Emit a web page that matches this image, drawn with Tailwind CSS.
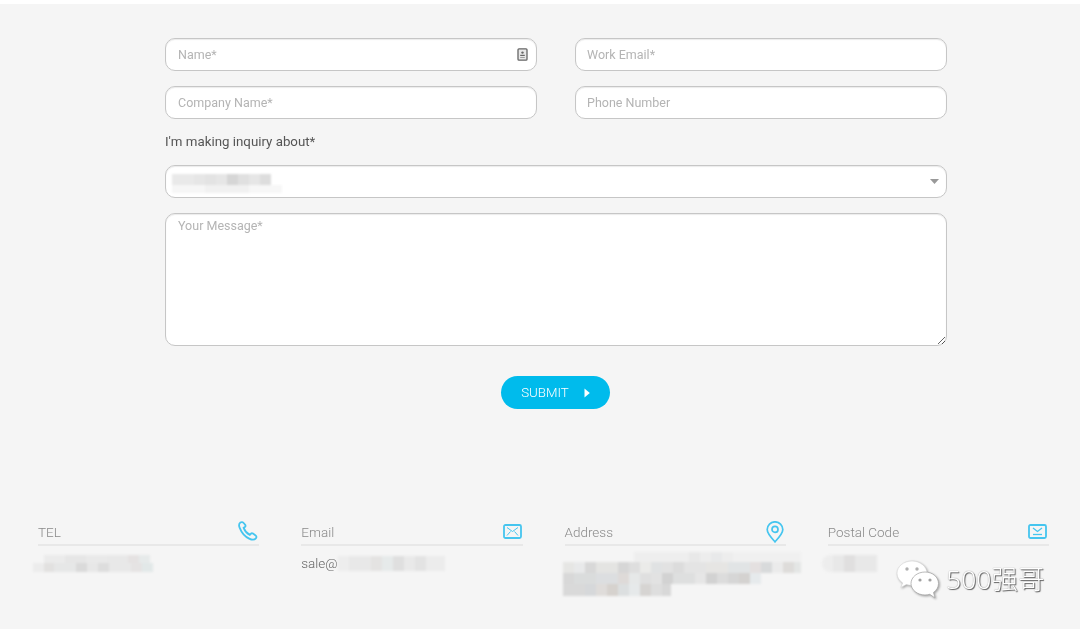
<!DOCTYPE html>
<html lang="en">
<head>
<meta charset="utf-8">
<script src="https://cdn.jsdelivr.net/npm/@tailwindcss/browser@4"></script>
<title>Inquiry form</title>
</head>
<body class="bg-[#f5f5f5] font-['Roboto',sans-serif]">
<div class="relative w-[1080px] h-[629px] overflow-hidden bg-[#f5f5f5] blur-[0.3px]">
  <div class="h-[4px] bg-white"></div>
  <form class="w-[782px] ml-[165px] mt-[34px]">
    <div class="grid grid-cols-2 gap-x-[38px] gap-y-[15px]">
      <div class="relative">
        <input placeholder="Name*" class="block w-full h-[33px] px-[12px] bg-white border border-[#c6c6c6] rounded-[10px] text-[12.5px] outline-none placeholder:text-[#b4b4b4] shadow-[inset_0_1px_1px_rgba(0,0,0,0.08)]">
        <svg class="absolute right-[9px] top-[10px] w-[11px] h-[13px]" viewBox="0 0 11 13"><rect x="1" y="0.8" width="9" height="11.4" rx="1" fill="#e8e8e8" stroke="#666666" stroke-width="1.3"/><circle cx="5.5" cy="4.6" r="1.2" fill="#666666"/><rect x="3.2" y="6.8" width="4.6" height="1.2" fill="#666666"/><rect x="3.2" y="9" width="4.6" height="0.9" fill="#999999"/></svg>
      </div>
      <input placeholder="Work Email*" class="block w-full h-[33px] px-[11px] bg-white border border-[#c6c6c6] rounded-[10px] text-[12.5px] outline-none placeholder:text-[#b4b4b4] shadow-[inset_0_1px_1px_rgba(0,0,0,0.08)]">
      <input placeholder="Company Name*" class="block w-full h-[33px] px-[12px] bg-white border border-[#c6c6c6] rounded-[10px] text-[12.5px] outline-none placeholder:text-[#b4b4b4] shadow-[inset_0_1px_1px_rgba(0,0,0,0.08)]">
      <input placeholder="Phone Number" class="block w-full h-[33px] px-[11px] bg-white border border-[#c6c6c6] rounded-[10px] text-[12.5px] outline-none placeholder:text-[#b4b4b4] shadow-[inset_0_1px_1px_rgba(0,0,0,0.08)]">
    </div>
    <div class="mt-[14px] h-[18px] leading-[18px] text-[13.3px] text-[#555555]">I'm making inquiry about*</div>
    <div class="mt-[14px] h-[33px] flex items-center justify-between bg-white border border-[#c6c6c6] rounded-[10px] pr-[7px] shadow-[inset_0_1px_1px_rgba(0,0,0,0.08)]">
      <div class="flex flex-col ml-[6px] mt-[3px] blur-[1.2px]">
        <div class="flex h-[11px]">
          <div class="w-[22px] bg-[#e9e9e9]"></div><div class="w-[11px] bg-[#e6e6e6]"></div><div class="w-[11px] bg-[#e3e3e3]"></div><div class="w-[11px] bg-[#e6e6e6]"></div><div class="w-[11px] bg-[#d6d6d6]"></div><div class="w-[11px] bg-[#e0e0e0]"></div><div class="w-[11px] bg-[#e6e6e6]"></div><div class="w-[11px] bg-[#dddddd]"></div>
        </div>
        <div class="flex h-[8px]">
          <div class="w-[33px] bg-[#f6f6f6]"></div><div class="w-[44px] bg-[#f1f1f1]"></div><div class="w-[33px] bg-[#f7f7f7]"></div>
        </div>
      </div>
      <svg class="w-[9px] h-[5px]" viewBox="0 0 9 5"><path d="M0 0h9L4.500 5z" fill="#999999"/></svg>
    </div>
    <textarea placeholder="Your Message*" class="block mt-[15px] w-full h-[133px] px-[12px] py-[3px] bg-white border border-[#c6c6c6] rounded-[10px] text-[12.5px] outline-none placeholder:text-[#b4b4b4] shadow-[inset_0_1px_1px_rgba(0,0,0,0.08)]"></textarea>
    <div class="flex justify-center mt-[30px] pr-[1px]">
      <button type="button" class="w-[109px] h-[33px] flex items-center justify-center gap-[15px] rounded-full bg-[#00bbec] text-white text-[13.3px] font-light">
        <span>SUBMIT</span>
        <svg class="w-[6px] h-[10px]" viewBox="0 0 6 10"><path d="M0.500 0.500L5.800 5L0.500 9.500z" fill="#ffffff"/></svg>
      </button>
    </div>
  </form>

  <div class="grid grid-cols-4 gap-x-[42px] pl-[38px] pr-[31px] mt-[112px]">
    <div>
      <div class="h-[25px] flex items-center justify-between border-b-2 border-[#e8e8e8] pb-[2px] pr-[1px]">
        <span class="mt-[2px] text-[13.5px] font-light text-[#8a8a8a]">TEL</span>
        <svg class="w-[20px] h-[20px] mb-[2px]" viewBox="0 0 20 20" fill="none" stroke="#45c5ef" stroke-width="1.800"><path d="M2.400 1.600C1 2.600.8 4.600 1.600 6.600c1.600 4.200 5.400 9 9.600 11 2.400 1.200 5.200 1.400 6.600-.2 1-1.100.8-2.300-.2-3l-2.600-1.800c-.9-.6-1.700-.4-2.300.3l-.9 1c-2.600-1.300-5-4-6.200-7l1.200-.8c.7-.5.9-1.300.5-2.200L5.700 2C5 .9 3.500.8 2.400 1.600z"/></svg>
      </div>
      <div class="mt-[9px] ml-[-5px] flex flex-col blur-[0.8px]">
        <div class="flex h-[8px]"><div class="w-[11px]"></div><div class="w-[21px] bg-[#ebebeb]"></div><div class="w-[21px] bg-[#e6e6e6]"></div><div class="w-[21px] bg-[#e9e9e9]"></div><div class="w-[21px] bg-[#e8e8e8]"></div><div class="w-[11px] bg-[#e5e2e2]"></div><div class="w-[11px] bg-[#e6eaea]"></div></div>
        <div class="flex h-[9px]"><div class="w-[11px] bg-[#ececec]"></div><div class="w-[10px] bg-[#e2e1e0]"></div><div class="w-[22px] bg-[#e6e7e7]"></div><div class="w-[11px] bg-[#dadada]"></div><div class="w-[11px] bg-[#e7e7e7]"></div><div class="w-[11px] bg-[#dddddd]"></div><div class="w-[22px] bg-[#e8e8e8]"></div><div class="w-[11px] bg-[#e5e3e3]"></div><div class="w-[11px] bg-[#e2e8e8]"></div></div>
      </div>
    </div>
    <div>
      <div class="h-[25px] flex items-center justify-between border-b-2 border-[#e8e8e8] pb-[2px]">
        <span class="mt-[2px] text-[13.5px] font-light text-[#8a8a8a]">Email</span>
        <svg class="w-[19px] h-[15px] mr-[1px]" viewBox="0 0 19 15" fill="none" stroke="#45c5ef"><rect x="1" y="1" width="17" height="13" rx="1.500" stroke-width="1.800"/><path d="M4 3.500L9.500 7.500L15 3.500M4 11.500L7.500 7.500M15 11.500L11.500 7.500" stroke-width="1"/></svg>
      </div>
      <div class="mt-[9px] h-[17px] flex items-center">
        <span class="text-[13.5px] font-light text-[#666666] leading-[17px]">sale@</span>
        <div class="flex h-[15px] blur-[1px]"><div class="w-[11px] bg-[#ededed]"></div><div class="w-[22px] bg-[#e8e8e8]"></div><div class="w-[11px] bg-[#e4e3e2]"></div><div class="w-[11px] bg-[#e6eaea]"></div><div class="w-[11px] bg-[#dfdfdf]"></div><div class="w-[11px] bg-[#e9e9e9]"></div><div class="w-[11px] bg-[#e3e3e3]"></div><div class="w-[19px] bg-[#ececec]"></div></div>
      </div>
    </div>
    <div class="relative">
      <div class="h-[25px] flex items-center justify-between border-b-2 border-[#e8e8e8] pb-[2px] pr-[2px]">
        <span class="mt-[2px] text-[13.5px] font-light text-[#8a8a8a]">Address</span>
        <svg class="w-[18px] h-[22px] mt-[1px]" viewBox="0 0 18 22" fill="none" stroke="#45c5ef" stroke-width="1.700"><path d="M9 20.800C5.500 17 1.200 12.800 1.200 8.600a7.800 7.800 0 0 1 15.600 0c0 4.200-4.300 8.400-7.800 12.200z"/><circle cx="9" cy="8.400" r="3"/></svg>
      </div>
      <div class="mt-[6px] ml-[-2px] w-[238px] flex flex-col blur-[0.8px]">
        <div class="flex h-[10px] ml-[71px]"><div class="w-[55px] bg-[#eeeeee]"></div><div class="w-[11px] bg-[#e8e8e8]"></div><div class="w-[11px] bg-[#ededed]"></div><div class="w-[11px] bg-[#e8e9ea]"></div><div class="w-[11px] bg-[#ededed]"></div><div class="w-[68px] bg-[#f0f0f0]"></div></div>
        <div class="flex h-[11px]"><div class="w-[11px] bg-[#e6e6e4]"></div><div class="w-[11px] bg-[#e8e9ea]"></div><div class="w-[11px] bg-[#d8d8d8]"></div><div class="w-[22px] bg-[#e4e4e2]"></div><div class="w-[11px] bg-[#d6d6d6]"></div><div class="w-[11px] bg-[#dedede]"></div><div class="w-[11px] bg-[#ebebe9]"></div><div class="w-[11px] bg-[#e0e2e3]"></div><div class="w-[11px] bg-[#e2e2e2]"></div><div class="w-[11px] bg-[#dcdcdc]"></div><div class="w-[22px] bg-[#e4e4e4]"></div><div class="w-[22px] bg-[#e6e5e3]"></div><div class="w-[22px] bg-[#e1e4e5]"></div><div class="w-[11px] bg-[#e4e0e0]"></div><div class="w-[11px] bg-[#d8dadb]"></div><div class="w-[11px] bg-[#ebebeb]"></div><div class="w-[11px] bg-[#dedcda]"></div><div class="w-[7px] bg-[#e4e6e5]"></div></div>
        <div class="flex h-[11px]"><div class="w-[11px] bg-[#d8d8d8]"></div><div class="w-[22px] bg-[#dadcdc]"></div><div class="w-[22px] bg-[#dcdee0]"></div><div class="w-[11px] bg-[#dedad8]"></div><div class="w-[11px] bg-[#e6e8e8]"></div><div class="w-[11px] bg-[#dfdfdf]"></div><div class="w-[11px] bg-[#e2e2e2]"></div><div class="w-[11px] bg-[#d2d2d2]"></div><div class="w-[22px] bg-[#dedfdf]"></div><div class="w-[11px] bg-[#e6e6e6]"></div><div class="w-[11px] bg-[#d2d2d2]"></div><div class="w-[11px] bg-[#dcdcdc]"></div><div class="w-[11px] bg-[#d6d6d6]"></div><div class="w-[11px] bg-[#d4d2d0]"></div><div class="w-[11px] bg-[#e6eaec]"></div></div>
        <div class="flex h-[12px]"><div class="w-[22px] bg-[#d9d9d9]"></div><div class="w-[11px] bg-[#d6d8da]"></div><div class="w-[11px] bg-[#dfdcda]"></div><div class="w-[11px] bg-[#d6d2ce]"></div><div class="w-[11px] bg-[#dcdfe0]"></div><div class="w-[11px] bg-[#e6e9ea]"></div><div class="w-[11px] bg-[#d6d4d2]"></div><div class="w-[11px] bg-[#dedede]"></div><div class="w-[9px] bg-[#d8d8d8]"></div></div>
      </div>
    </div>
    <div>
      <div class="h-[25px] flex items-center justify-between border-b-2 border-[#e8e8e8] pb-[2px] pr-[2px]">
        <span class="mt-[2px] text-[13.5px] font-light text-[#8a8a8a]">Postal Code</span>
        <svg class="w-[19px] h-[15px]" viewBox="0 0 19 15" fill="none" stroke="#45c5ef"><rect x="1" y="1" width="17" height="13" rx="1.500" stroke-width="1.800"/><path d="M5 4L9.500 7.500L14 4" stroke-width="1.300"/><path d="M5 10.500H14" stroke-width="1.300"/></svg>
      </div>
      <div class="mt-[9px] ml-[-6px] flex h-[17px] blur-[0.8px]"><div class="w-[11px] bg-[#ededed] rounded-l-full"></div><div class="w-[11px] bg-[#e8e8e8]"></div><div class="w-[11px] bg-[#e0dfdf]"></div><div class="w-[22px] bg-[#e8e8e8]"></div></div>
    </div>
  </div>

  <div class="absolute left-[896px] top-[560px] flex items-center gap-[6px]">
    <svg class="w-[44px] h-[39px] drop-shadow-[1px_1px_1px_rgba(0,0,0,0.35)]" viewBox="0 0 44 39">
      <path d="M16 1C7.700 1 1 6.500 1 13.300c0 3.900 2.200 7.300 5.700 9.600L4.800 27.400l5.500-2.800c1.800.5 3.700.8 5.700.8 8.300 0 15-5.500 15-12.100S24.300 1 16 1z" fill="#ffffff" stroke="#d4d4d4" stroke-width="0.600"/>
      <path d="M29 12c-7.700 0-14 5.200-14 11.500S21.300 35 29 35c1.700 0 3.300-.3 4.800-.7l5.200 3.700-1.500-5.600c3-2.100 5-5.200 5-8.900C42.500 17.200 36.700 12 29 12z" fill="#ffffff" stroke="#a8a8a8" stroke-width="0.800"/>
      <circle cx="11" cy="9" r="1.700" fill="#b0b0b0"/><circle cx="21" cy="9" r="1.700" fill="#b0b0b0"/>
      <circle cx="24" cy="20" r="1.600" fill="#a0a0a0"/><circle cx="34" cy="20" r="1.600" fill="#a0a0a0"/>
    </svg>
    <span class="text-[26.500px] leading-none font-light text-white font-['Noto_Sans','Noto_Sans_CJK_SC',sans-serif] [text-shadow:1px_1px_1px_#5f5f5f,0_0_1px_#7a7a7a]">500强哥</span>
  </div>
</div>
</body>
</html>
